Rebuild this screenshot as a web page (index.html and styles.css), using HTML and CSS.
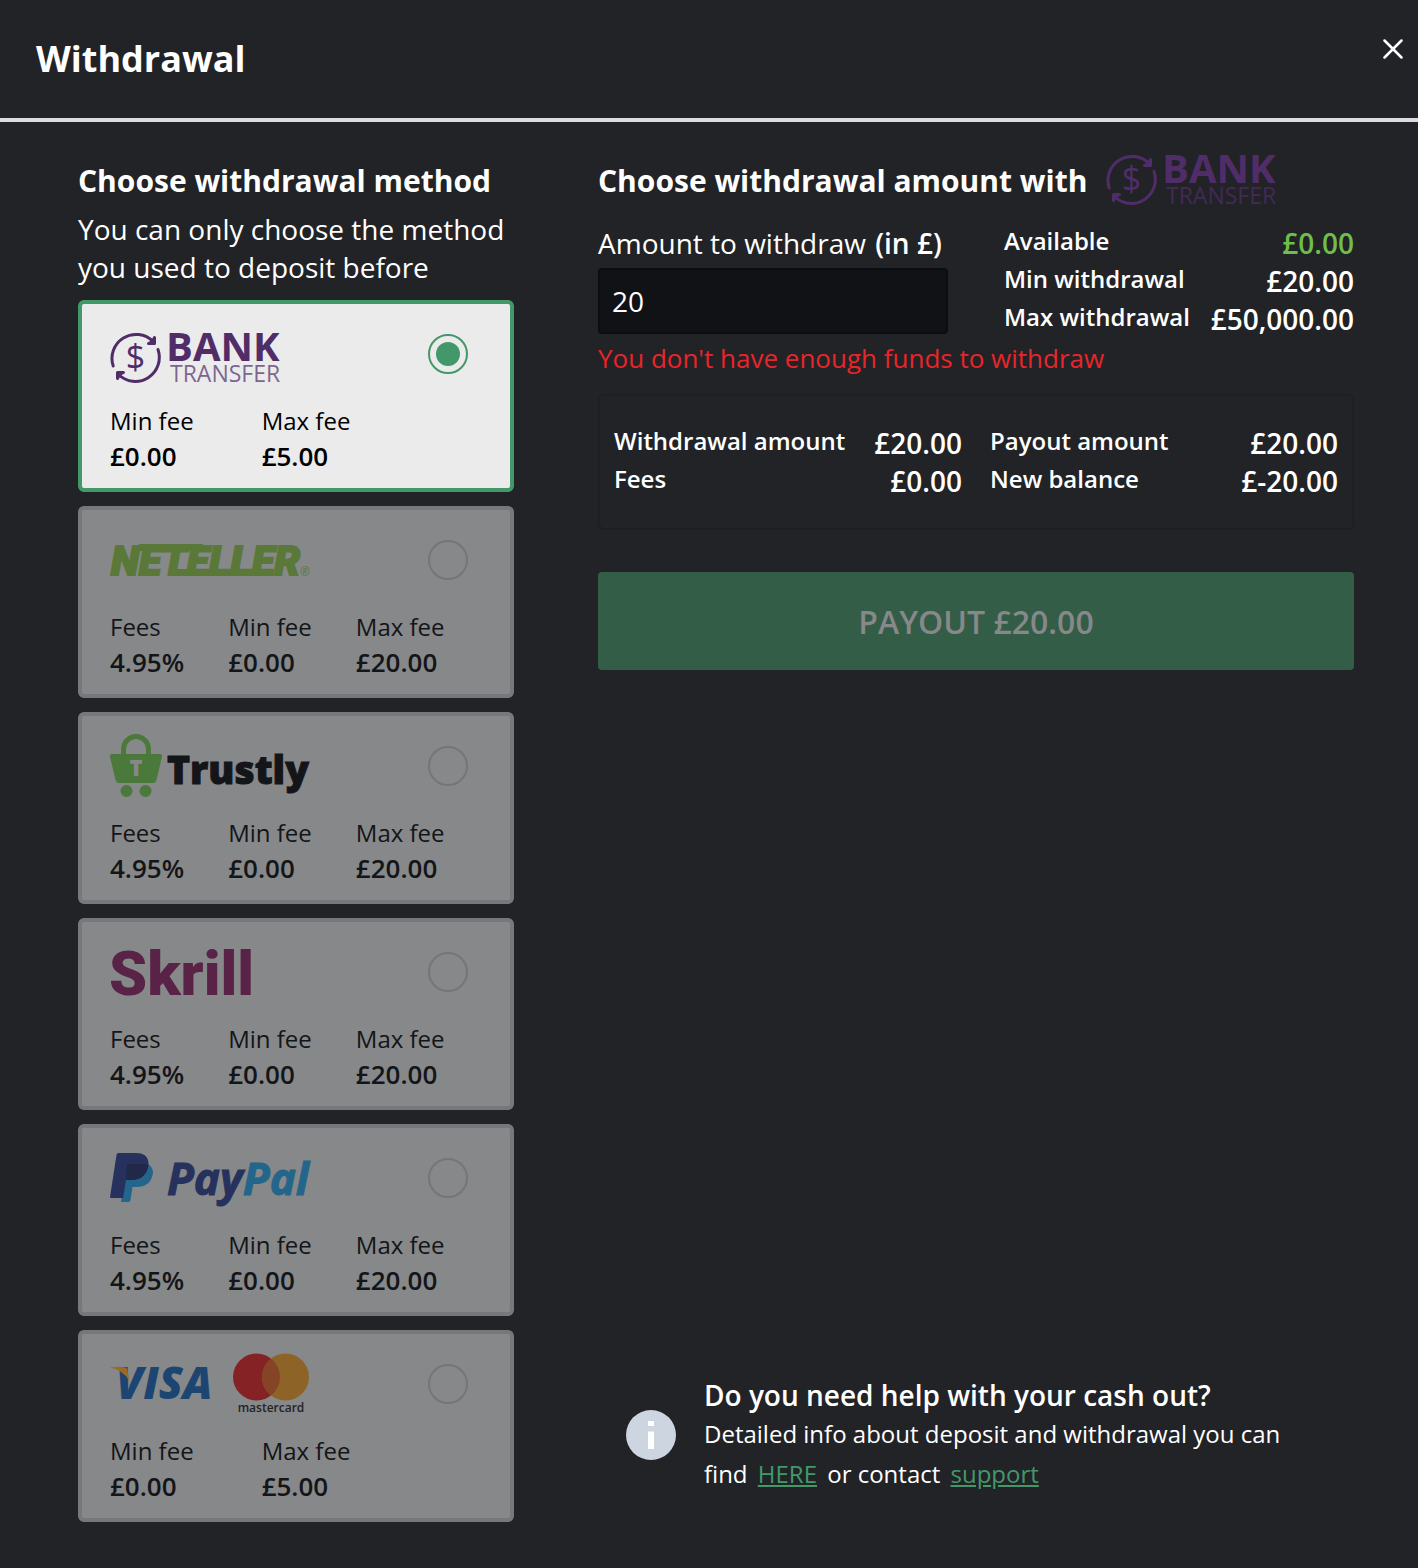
FILE: index.html
```html
<!DOCTYPE html>
<html lang="en">
<head>
  <meta charset="UTF-8">
  <meta name="viewport" content="width=device-width, initial-scale=1.0">
  <title>Withdrawal</title>
  <link rel="stylesheet" href="styles.css">
</head>
<body>
  <header class="header">
    <h1>Withdrawal</h1>
    <button type="button" class="close" aria-label="Close">
      <svg width="20" height="20" viewBox="0 0 20 20"><path d="M1.500 1.500l17 17M18.500 1.500l-17 17" /></svg>
    </button>
  </header>

  <main class="content">
    <!-- Withdrawal methods -->
    <section class="methods">
      <h2>Choose withdrawal method</h2>
      <p class="hint">You can only choose the method you used to deposit before</p>

      <div class="method-list">
        <label class="method active">
          <span class="method-top">
            <svg class="logo" viewBox="0 -10 200 64" role="img" aria-label="Bank Transfer">
              <g class="bank-lines">
                <path d="M3.200 34A24 24 0 0 1 43 9.500" />
                <path d="M48 17.500A24 24 0 0 1 8.500 42.500" />
              </g>
              <g class="bank-arrows">
                <path d="M44.500 5.500v6h-6l4-2z" />
                <path d="M7.500 46.500v-6h6l-4 2z" />
              </g>
              <text class="logo-dollar" x="25.500" y="37">$</text>
              <text class="logo-bank" x="56" y="29">BANK</text>
              <text class="logo-transfer" x="60" y="50">TRANSFER</text>
            </svg>
            <input type="radio" name="method" value="bank" checked>
          </span>
          <span class="fees fees-wide">
            <span class="fee">Min fee <b>£0.00</b></span>
            <span class="fee">Max fee <b>£5.00</b></span>
          </span>
        </label>

        <label class="method">
          <span class="method-top">
            <svg class="logo" viewBox="0 0 200 64" role="img" aria-label="Neteller">
              <g fill="#5a7838">
                <text class="logo-neteller" x="1" y="47">NETELLER</text>
                <path d="M29 16h64l-1 7H28z" />
                <path d="M64 41h100l-1 7H63z" />
                <text class="logo-mark" x="190" y="48">®</text>
              </g>
            </svg>
            <input type="radio" name="method" value="neteller">
          </span>
          <span class="fees">
            <span class="fee">Fees <b>4.95%</b></span>
            <span class="fee">Min fee <b>£0.00</b></span>
            <span class="fee">Max fee <b>£20.00</b></span>
          </span>
        </label>

        <label class="method">
          <span class="method-top">
            <svg class="logo" viewBox="0 0 200 64" role="img" aria-label="Trustly">
              <path d="M13.500 21v-6a12.500 12.500 0 0 1 25 0v6" fill="none" stroke="#4b793b" stroke-width="5" />
              <path d="M2 20h48q2.500 0 2 2.500L46.500 46q-.8 3-3.500 3H9q-2.700 0-3.500-3L0 22.500Q-.5 20 2 20z" fill="#4b793b" />
              <circle cx="16.500" cy="57" r="6" fill="#4b793b" />
              <circle cx="35.500" cy="57" r="6" fill="#4b793b" />
              <text class="logo-bag" x="26" y="42">T</text>
              <text class="logo-trustly" x="57" y="50">Trustly</text>
            </svg>
            <input type="radio" name="method" value="trustly">
          </span>
          <span class="fees">
            <span class="fee">Fees <b>4.95%</b></span>
            <span class="fee">Min fee <b>£0.00</b></span>
            <span class="fee">Max fee <b>£20.00</b></span>
          </span>
        </label>

        <label class="method">
          <span class="method-top">
            <svg class="logo" viewBox="0 0 200 64" role="img" aria-label="Skrill">
              <text class="logo-skrill" x="-1" y="55">Skrill</text>
            </svg>
            <input type="radio" name="method" value="skrill">
          </span>
          <span class="fees">
            <span class="fee">Fees <b>4.95%</b></span>
            <span class="fee">Min fee <b>£0.00</b></span>
            <span class="fee">Max fee <b>£20.00</b></span>
          </span>
        </label>

        <label class="method">
          <span class="method-top">
            <svg class="logo" viewBox="0 0 200 64" role="img" aria-label="PayPal">
              <path d="M16.500 17H36q7 3 7 10-2 14-17 14h-3.500l-2 13q-.3 2-2 2H11z" fill="#24658b" />
              <path d="M8.500 7H26q13 0 12.500 12Q36 34 21 34h-5l-1.500 9-1.500 9H1q-1 0-1-1L6.500 9q.3-2 2-2z" fill="#26315d" />
              <path d="M17 18h19.500l2 1Q36 34 21 34h-5z" fill="#222948" />
              <text class="logo-paypal" x="57" y="49">Pay<tspan class="pal">Pal</tspan></text>
            </svg>
            <input type="radio" name="method" value="paypal">
          </span>
          <span class="fees">
            <span class="fee">Fees <b>4.95%</b></span>
            <span class="fee">Min fee <b>£0.00</b></span>
            <span class="fee">Max fee <b>£20.00</b></span>
          </span>
        </label>

        <label class="method">
          <span class="method-top">
            <svg class="logo" viewBox="0 0 200 64" role="img" aria-label="Visa and Mastercard">
              <text class="logo-visa" x="6" y="47">VISA</text>
              <path d="M0 15.500Q8 14 15.500 15.500q1.500.5 1.700 2L19.500 29Q13 18 0 15.500z" fill="#9a6a28" />
              <circle cx="146.500" cy="25" r="23.500" fill="#842226" />
              <circle cx="175.500" cy="25" r="23.500" fill="#8d6328" />
              <path d="M161 6.500a23.500 23.500 0 0 1 0 37a23.500 23.500 0 0 1 0-37z" fill="#864426" />
              <text class="logo-mastercard" x="161" y="60">mastercard</text>
            </svg>
            <input type="radio" name="method" value="card">
          </span>
          <span class="fees fees-wide">
            <span class="fee">Min fee <b>£0.00</b></span>
            <span class="fee">Max fee <b>£5.00</b></span>
          </span>
        </label>
      </div>
    </section>

    <!-- Amount -->
    <section class="amount">
      <h2>
        Choose withdrawal amount with
        <svg width="176" height="54" viewBox="0 0 176 54" role="img" aria-label="Bank Transfer">
          <g class="bank-lines">
            <path d="M3.200 34A24 24 0 0 1 43 9.500" />
            <path d="M48 17.500A24 24 0 0 1 8.500 42.500" />
          </g>
          <g class="bank-arrows">
            <path d="M44.500 5.500v6h-6l4-2z" />
            <path d="M7.500 46.500v-6h6l-4 2z" />
          </g>
          <text class="logo-dollar" x="25.500" y="37">$</text>
          <text class="logo-bank" x="56" y="29">BANK</text>
          <text class="logo-transfer" x="60" y="50">TRANSFER</text>
        </svg>
      </h2>

      <div class="amount-row">
        <div class="field">
          <label for="amountInput">Amount to withdraw <b>(in £)</b></label>
          <input type="text" id="amountInput" value="20">
        </div>
        <dl class="figures">
          <dt>Available</dt><dd class="positive">£0.00</dd>
          <dt>Min withdrawal</dt><dd>£20.00</dd>
          <dt>Max withdrawal</dt><dd>£50,000.00</dd>
        </dl>
      </div>
      <p class="error">You don't have enough funds to withdraw</p>

      <div class="summary">
        <dl class="figures">
          <dt>Withdrawal amount</dt><dd>£20.00</dd>
          <dt>Fees</dt><dd>£0.00</dd>
        </dl>
        <dl class="figures">
          <dt>Payout amount</dt><dd>£20.00</dd>
          <dt>New balance</dt><dd>£-20.00</dd>
        </dl>
      </div>

      <button type="button" class="payout" disabled>PAYOUT £20.00</button>

      <!-- Help -->
      <div class="help">
        <svg width="50" height="50" viewBox="0 0 50 50" aria-hidden="true">
          <circle cx="25" cy="25" r="25" fill="#cdd5e1" />
          <path d="M22 11h6v5h-6zM22 21.500h6V39h-6z" fill="#fff" />
        </svg>
        <div>
          <h3>Do you need help with your cash out?</h3>
          <p>Detailed info about deposit and withdrawal you can find <a href="#">HERE</a> or contact <a href="#">support</a></p>
        </div>
      </div>
    </section>
  </main>
</body>
</html>
```
FILE: styles.css
```css
/* Global Styles */
* {
  margin: 0;
  padding: 0;
  box-sizing: border-box;
}

body {
  min-height: 100vh;
  display: flex;
  flex-direction: column;
  background-color: #222327;
  color: #ffffff;
  font-family: 'Open Sans', sans-serif;
  font-size: 24px;
}

input,
button {
  font-family: inherit;
}

svg {
  display: block;
  flex-shrink: 0;
}

/* Header */
.header {
  display: flex;
  justify-content: space-between;
  align-items: flex-start;
  padding: 28px 5px 28px 36px;
  border-bottom: 4px solid #dcdadb;
}

h1 {
  font-size: 36px;
  line-height: 62px;
  font-weight: 700;
}

.close {
  display: flex;
  justify-content: center;
  align-items: center;
  width: 40px;
  height: 42px;
  background: none;
  border: none;
  cursor: pointer;
}

.close path {
  fill: none;
  stroke: #ffffff;
  stroke-width: 2.5;
  stroke-linecap: round;
}

/* Layout */
.content {
  flex: 1;
  display: grid;
  grid-template-columns: 436px 1fr;
  gap: 84px;
  padding: 40px 64px 46px 78px;
}

h2 {
  display: flex;
  align-items: center;
  gap: 19px;
  height: 38px;
  font-size: 30px;
  line-height: 38px;
  font-weight: 700;
}

/* Methods */
.hint {
  margin: 10px 0 14px;
  font-size: 28px;
  line-height: 38px;
}

.method-list {
  display: flex;
  flex-direction: column;
  gap: 14px;
}

.method {
  display: block;
  height: 192px;
  padding: 18px 42px 0 28px;
  border: 4px solid #77787b;
  border-radius: 6px;
  background-color: #868889;
  color: #141518;
  cursor: pointer;
}

.method.active {
  border-color: #43986a;
  background-color: #ebebeb;
  color: #000000;
}

.method-top {
  display: flex;
  justify-content: space-between;
  align-items: center;
}

.logo {
  width: 200px;
  height: 64px;
  overflow: visible;
}

.method input {
  appearance: none;
  width: 40px;
  height: 40px;
  border: 2px solid #747678;
  border-radius: 50%;
}

.method input:checked {
  padding: 6px;
  border-color: #43986a;
  background-color: #43986a;
  background-clip: content-box;
}

.fees {
  display: flex;
  gap: 44px;
  margin-top: 18px;
}

.fees-wide {
  gap: 68px;
}

.fee {
  line-height: 34px;
}

.fee b {
  display: block;
  font-size: 26px;
  line-height: 36px;
  font-weight: 600;
}

/* Logos */
.bank-lines {
  fill: none;
  stroke: #502d68;
  stroke-width: 3;
  stroke-linecap: round;
}

.bank-arrows {
  fill: #502d68;
  stroke: #502d68;
  stroke-width: 3;
  stroke-linejoin: round;
}

.logo-dollar {
  font-size: 34px;
  font-weight: 400;
  text-anchor: middle;
  fill: #502d68;
}

.logo-bank {
  font-size: 40px;
  font-weight: 700;
  fill: #502d68;
}

.logo-transfer {
  font-size: 23px;
  font-weight: 400;
  fill: #502d68;
  opacity: 0.7;
}

.logo-neteller {
  font-family: Roboto, sans-serif;
  font-size: 41px;
  font-weight: 900;
  font-style: italic;
  stroke: #5a7838;
  stroke-width: 2;
}

.logo-mark {
  font-size: 12px;
}

.logo-bag {
  font-size: 22px;
  font-weight: 800;
  text-anchor: middle;
  fill: #868889;
}

.logo-trustly {
  font-size: 39px;
  font-weight: 800;
  fill: #141518;
  stroke: #141518;
  stroke-width: 1;
}

.logo-skrill {
  font-family: Roboto, sans-serif;
  font-size: 61px;
  font-weight: 900;
  fill: #592347;
}

.logo-paypal {
  font-size: 44px;
  font-weight: 700;
  font-style: italic;
  fill: #26315d;
  stroke: #26315d;
  stroke-width: 1;
}

.logo-paypal .pal {
  fill: #24658b;
  stroke: #24658b;
}

.logo-visa {
  font-size: 44px;
  font-weight: 800;
  font-style: italic;
  fill: #1c4572;
}

.logo-mastercard {
  font-size: 12px;
  font-weight: 600;
  text-anchor: middle;
  fill: #222327;
}

/* Amount */
.amount {
  display: flex;
  flex-direction: column;
}

.amount-row {
  display: grid;
  grid-template-columns: 350px 1fr;
  gap: 56px;
  margin-top: 24px;
}

.field label {
  display: block;
  margin-bottom: 6px;
  font-size: 28px;
  line-height: 38px;
}

.field b {
  margin-left: 2px;
  font-weight: 600;
}

.field input {
  width: 100%;
  height: 66px;
  padding: 0 12px;
  border: 2px solid #0c0d10;
  border-radius: 4px;
  background-color: #111216;
  color: #ffffff;
  font-size: 28px;
}

.figures {
  display: grid;
  grid-template-columns: 1fr auto;
  align-content: start;
}

.figures dt {
  line-height: 34px;
  font-weight: 600;
}

.figures dd {
  font-size: 28px;
  line-height: 38px;
  font-weight: 600;
  text-align: right;
}

.figures .positive {
  color: #6fbe4a;
}

.error {
  margin-top: 1px;
  color: #e8252a;
  font-size: 26px;
  line-height: 38px;
}

.summary {
  display: grid;
  grid-template-columns: 1fr 1fr;
  gap: 28px;
  margin-top: 17px;
  padding: 28px 14px;
  border: 2px solid #1e1f23;
  border-radius: 6px;
}

.payout {
  height: 98px;
  margin-top: 42px;
  border: none;
  border-radius: 4px;
  background-color: #335d47;
  color: #868889;
  font-size: 32px;
  font-weight: 600;
}

/* Help */
.help {
  display: flex;
  align-items: center;
  gap: 28px;
  margin-top: auto;
  padding: 28px;
}

.help h3 {
  font-size: 28px;
  line-height: 38px;
  font-weight: 600;
}

.help p {
  line-height: 40px;
}

.help a {
  margin: 0 4px;
  color: #43986a;
}
```
